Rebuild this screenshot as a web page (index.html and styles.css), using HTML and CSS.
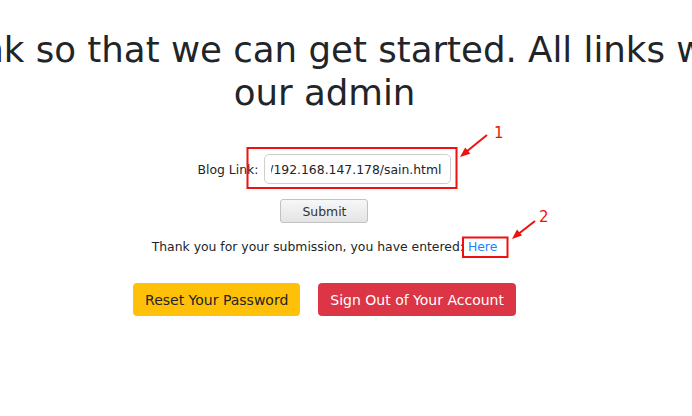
FILE: index.html
```html
<!DOCTYPE html>
<html lang="en">
<head>
<meta charset="utf-8">
<title>Blog Link</title>
<link rel="stylesheet" href="styles.css">
</head>
<body>
<main class="page">
  <h1 class="title">Submit your blog link so that we can get started. All links will be checked by<br>our admin</h1>
  <form class="link-form">
    <div class="field">
      <label class="field-label" for="blog">Blog Link:</label>
      <input class="field-input" id="blog" type="text" value="http://192.168.147.178/sain.html">
    </div>
    <button class="submit" type="button">Submit</button>
  </form>
  <p class="result">Thank you for your submission, you have entered: <a class="result-link" href="#">Here</a></p>
  <div class="actions">
    <button class="btn btn-warning" type="button">Reset Your Password</button>
    <button class="btn btn-danger" type="button">Sign Out of Your Account</button>
  </div>
</main>
<svg class="annotations" width="692" height="416" viewBox="0 0 692 416" aria-hidden="true">
  <rect x="247.5" y="148" width="209" height="40" fill="none" stroke="#f01010" stroke-width="2"/>
  <line x1="487" y1="135" x2="466" y2="152" stroke="#f01010" stroke-width="2"/>
  <polygon points="460,157 470.3,153.8 465.2,147.6" fill="#f01010"/>
  <text x="494" y="138" class="anno-num">1</text>
  <rect x="463" y="237.5" width="44.5" height="19.5" fill="none" stroke="#f01010" stroke-width="2"/>
  <line x1="535" y1="221" x2="517" y2="235" stroke="#f01010" stroke-width="2"/>
  <polygon points="512,239 522,235.5 517,229.5" fill="#f01010"/>
  <text x="539" y="222" class="anno-num">2</text>
</svg>
</body>
</html>
```
FILE: styles.css
```css
html, body {
  margin: 0;
  padding: 0;
  background: #fff;
}
body {
  position: relative;
  width: 692px;
  height: 416px;
  overflow: hidden;
  font-family: "DejaVu Sans", sans-serif;
  color: #212529;
}
.page {
  box-sizing: border-box;
  width: 692px;
  padding-right: 43px;
  overflow: hidden;
  display: flex;
  flex-direction: column;
  align-items: center;
}
.title {
  margin: 29px 0 0;
  font-size: 35.6px;
  font-weight: 500;
  line-height: 42.7px;
  white-space: nowrap;
  text-align: center;
  flex-shrink: 0;
}
.link-form {
  margin-top: 40px;
  display: flex;
  flex-direction: column;
  align-items: center;
}
.field {
  display: flex;
  align-items: center;
  gap: 6px;
  font-size: 12.4px;
}
.field-label {
  color: #212529;
}
.field-input {
  box-sizing: border-box;
  width: 187px;
  height: 30px;
  padding: 0 6px;
  border: 1px solid #cfcfcf;
  border-radius: 5px;
  font-family: "DejaVu Sans", sans-serif;
  font-size: 12.4px;
  color: #212529;
  text-indent: -36px;
  outline: none;
}
.submit {
  box-sizing: border-box;
  margin-top: 15px;
  width: 88px;
  height: 24px;
  border: 1px solid #c2c2c2;
  border-radius: 3px;
  background: linear-gradient(#f7f7f7, #e4e4e4);
  font-family: "DejaVu Sans", sans-serif;
  font-size: 12.4px;
  color: #333;
  padding: 0;
}
.result {
  margin: 15px 0 0;
  font-size: 12.4px;
  line-height: 18px;
}
.result-link {
  color: #1a85ff;
  text-decoration: none;
}
.actions {
  margin-top: 27px;
  display: flex;
  gap: 18px;
}
.btn {
  box-sizing: border-box;
  height: 33px;
  padding: 0 11px;
  border: 1px solid transparent;
  border-radius: 3.5px;
  font-family: "DejaVu Sans", sans-serif;
  font-size: 14px;
}
.btn-warning {
  background: #ffc107;
  border-color: #ffc107;
  color: #212529;
}
.btn-danger {
  background: #dc3545;
  border-color: #dc3545;
  color: #fff;
}
.annotations {
  position: absolute;
  left: 0;
  top: 0;
  pointer-events: none;
}
.anno-num {
  font-family: "DejaVu Sans", sans-serif;
  font-size: 15px;
  fill: #f01010;
}
```
